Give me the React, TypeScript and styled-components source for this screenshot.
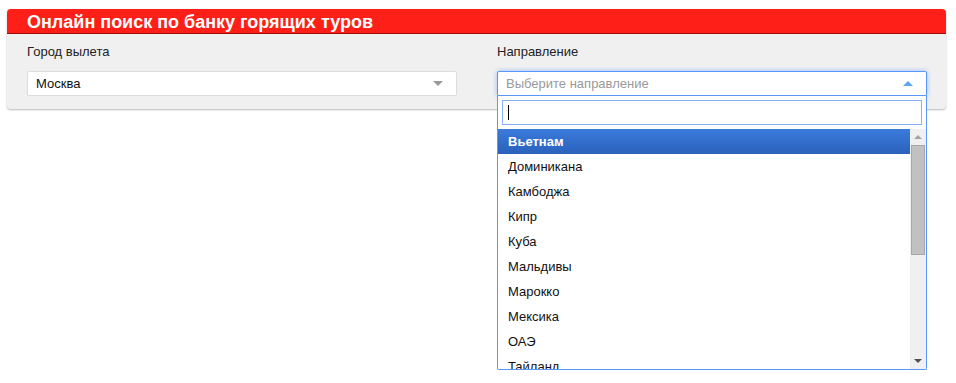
import React from "react";
import styled, { createGlobalStyle } from "styled-components";

const Global = createGlobalStyle`
  html, body { margin: 0; padding: 0; background: #fff; }
  body { font-family: "Liberation Sans", Arial, sans-serif; font-size: 13px; color: #333; }
`;

const Page = styled.div`
  box-sizing: border-box;
  min-height: 383px;
  padding: 9px 10px 0 7px;
`;

const Panel = styled.div`
  width: 939px;
  background: #f0f0f0;
  border-radius: 4px;
  box-shadow: 0 1px 2px rgba(0, 0, 0, 0.28);
`;

const Header = styled.div`
  height: 24px;
  background: #fe1f18;
  border-bottom: 1px solid #9e0c08;
  border-radius: 4px 4px 0 0;
  padding-left: 20px;
  display: flex;
  align-items: center;
`;

const Title = styled.h1`
  margin: 0;
  font-family: "Liberation Sans", Arial, sans-serif;
  font-size: 18px;
  font-weight: bold;
  color: #fff;
  line-height: 1;
  padding-top: 2px;
`;

const Body = styled.div`
  display: grid;
  grid-template-columns: 430px 430px;
  column-gap: 40px;
  padding: 10px 19px 13px 20px;
`;

const Field = styled.div`
  display: flex;
  flex-direction: column;
  position: relative;
`;

const Label = styled.label`
  font-size: 13px;
  color: #222;
  line-height: 16px;
  height: 16px;
  margin-bottom: 11px;
`;

const Choice = styled.div<{ $open?: boolean }>`
  height: 25px;
  box-sizing: border-box;
  background: #fff;
  border: 1px solid ${(p) => (p.$open ? "#5897fb" : "#dcdcdc")};
  border-radius: ${(p) => (p.$open ? "2px 2px 0 0" : "2px")};
  box-shadow: ${(p) => (p.$open ? "0 0 5px rgba(88,151,251,0.6)" : "none")};
  display: flex;
  align-items: center;
  padding: 0 10px 0 8px;
`;

const ChoiceText = styled.span<{ $placeholder?: boolean }>`
  flex: 1;
  font-size: 13px;
  color: ${(p) => (p.$placeholder ? "#9a9a9a" : "#111")};
`;

const Arrow = styled.span<{ $up?: boolean }>`
  width: 0;
  height: 0;
  border-left: 5px solid transparent;
  border-right: 5px solid transparent;
  ${(p) =>
    p.$up
      ? "border-bottom: 5px solid #5ea6f5;"
      : "border-top: 5px solid #9a9a9a;"}
  margin-right: 3px;
`;

const Dropdown = styled.div`
  position: absolute;
  left: 0;
  right: 0;
  top: 52px;
  height: 274px;
  box-sizing: border-box;
  background: #fff;
  border: 1px solid #5897fb;
  border-top: 0;
  border-radius: 0 0 2px 2px;
  display: flex;
  flex-direction: column;
  z-index: 10;
`;

const SearchWrap = styled.div`
  padding: 4px;
`;

const SearchBox = styled.div`
  height: 25px;
  box-sizing: border-box;
  border: 1px solid #86b3f7;
  display: flex;
  align-items: center;
  padding-left: 5px;
`;

const Caret = styled.span`
  width: 1px;
  height: 15px;
  background: #000;
`;

const ResultsArea = styled.div`
  flex: 1;
  display: flex;
  min-height: 0;
`;

const Results = styled.ul`
  flex: 1;
  margin: 0;
  padding: 0;
  list-style: none;
  overflow: hidden;
`;

const Item = styled.li<{ $active?: boolean }>`
  height: 25px;
  flex-shrink: 0;
  display: flex;
  align-items: center;
  padding-left: 10px;
  font-size: 13px;
  color: ${(p) => (p.$active ? "#fff" : "#111")};
  font-weight: ${(p) => (p.$active ? "bold" : "normal")};
  background: ${(p) =>
    p.$active ? "linear-gradient(to bottom, #3b7bdb 0%, #2a61bb 100%)" : "transparent"};
`;

const Scrollbar = styled.div`
  width: 16px;
  background: #f0f0f0;
  display: flex;
  flex-direction: column;
  align-items: center;
`;

const ScrollBtn = styled.div`
  height: 16px;
  display: flex;
  align-items: center;
  justify-content: center;
  align-self: stretch;
`;

const ScrollArrow = styled.span<{ $down?: boolean }>`
  width: 0;
  height: 0;
  border-left: 4px solid transparent;
  border-right: 4px solid transparent;
  ${(p) =>
    p.$down ? "border-top: 4px solid #505050;" : "border-bottom: 4px solid #a3a3a3;"}
`;

const ScrollTrack = styled.div`
  flex: 1;
  align-self: stretch;
  padding: 0 1px;
`;

const Thumb = styled.div`
  height: 110px;
  box-sizing: border-box;
  background: #c1c1c1;
  border: 1px solid #a8a8a8;
`;

const countries = [
  "Вьетнам",
  "Доминикана",
  "Камбоджа",
  "Кипр",
  "Куба",
  "Мальдивы",
  "Марокко",
  "Мексика",
  "ОАЭ",
  "Тайланд",
];

export default function App() {
  return (
    <>
      <Global />
      <Page>
        <Panel>
          <Header>
            <Title>Онлайн поиск по банку горящих туров</Title>
          </Header>
          <Body>
            <Field>
              <Label>Город вылета</Label>
              <Choice>
                <ChoiceText>Москва</ChoiceText>
                <Arrow />
              </Choice>
            </Field>
            <Field>
              <Label>Направление</Label>
              <Choice $open>
                <ChoiceText $placeholder>Выберите направление</ChoiceText>
                <Arrow $up />
              </Choice>
              <Dropdown>
                <SearchWrap>
                  <SearchBox>
                    <Caret />
                  </SearchBox>
                </SearchWrap>
                <ResultsArea>
                  <Results>
                    {countries.map((c, i) => (
                      <Item key={c} $active={i === 0}>
                        {c}
                      </Item>
                    ))}
                  </Results>
                  <Scrollbar>
                    <ScrollBtn>
                      <ScrollArrow />
                    </ScrollBtn>
                    <ScrollTrack>
                      <Thumb />
                    </ScrollTrack>
                    <ScrollBtn>
                      <ScrollArrow $down />
                    </ScrollBtn>
                  </Scrollbar>
                </ResultsArea>
              </Dropdown>
            </Field>
          </Body>
        </Panel>
      </Page>
    </>
  );
}
